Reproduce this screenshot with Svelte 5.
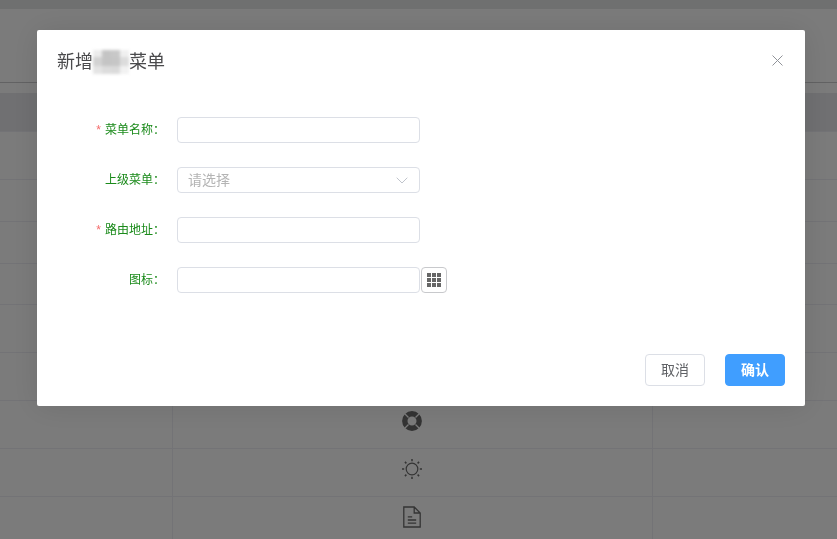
<script>
  const rows = [
    { h: 39, head: true },
    { h: 48 }, { h: 42 }, { h: 42 }, { h: 41 }, { h: 48 }, { h: 48 },
    { h: 48, icon: 'buoy' }, { h: 48, icon: 'sun' }, { h: 48, icon: 'doc' }
  ];
  const fields = [
    { label: '菜单名称：', required: true },
    { label: '上级菜单：', select: true },
    { label: '路由地址：', required: true },
    { label: '图标：', picker: true }
  ];
  const smudge = ['#ececec', '#c4c4c4', '#c8c8c8', '#f0f0f0', '#d2d2d2', '#c4c4c4', '#c6c6c6', '#dcdcdc', '#e4e4e4', '#dcdcdc', '#dadada', '#f2f2f2'];
</script>

<div class="page">
  <div class="topband"></div>
  <div class="toolbar"></div>
  <div class="gap"></div>
  <div class="table">
    {#each rows as r}
      <div class="row" class:head={r.head} style="height:{r.h}px">
        <div class="cell c1"></div>
        <div class="cell c2">
          {#if r.icon === 'buoy'}
            <svg width="22" height="22" viewBox="0 0 22 22"><circle cx="11" cy="11" r="7.200" fill="none" stroke="#686868" stroke-width="5.400"/><path d="M3.500 3.500l4 4M18.500 3.500l-4 4M3.500 18.500l4-4M18.500 18.500l-4-4" stroke="#f7f7f7" stroke-width="1.300"/></svg>
          {:else if r.icon === 'sun'}
            <svg width="22" height="22" viewBox="0 0 22 22" fill="none" stroke="#686868" stroke-width="1.200"><circle cx="11" cy="11" r="5.800"/><path d="M11 1v2.200M11 18.800V21M1 11h2.200M18.800 11H21M3.900 3.900l1.500 1.500M16.600 16.600l1.500 1.500M3.900 18.100l1.500-1.500M16.600 5.400l1.500-1.500" stroke-width="1.500"/></svg>
          {:else if r.icon === 'doc'}
            <svg width="22" height="22" viewBox="0 0 22 22" fill="none" stroke="#686868" stroke-width="1.300"><path d="M2.800 1h10.400l6 6v14H2.800zM13.200 1v6h6M6.800 10.800h4.400M6.800 14h8.400M6.800 17.200h8.400"/></svg>
          {/if}
        </div>
        <div class="cell c3"></div>
      </div>
    {/each}
  </div>
</div>

<div class="overlay">
  <div class="modal">
    <header>
      <h2>新增<span class="smudge">{#each smudge as c}<i style="background:{c}"></i>{/each}</span>菜单</h2>
      <svg class="close" width="11" height="11" viewBox="0 0 11 11"><path d="M.5.5l10 10M10.500.5l-10 10" stroke="#909399" stroke-width="1" fill="none"/></svg>
    </header>
    <form>
      {#each fields as f}
        <div class="item">
          <span class="label">{#if f.required}<em>*</em>{/if}{f.label}</span>
          <div class="control" class:select={f.select}>
            {#if f.select}
              <span class="ph">请选择</span>
              <svg width="12" height="7" viewBox="0 0 12 7"><path d="M.7.700L6 6l5.300-5.300" fill="none" stroke="#c0c4cc" stroke-width="1"/></svg>
            {/if}
          </div>
          {#if f.picker}
            <button type="button" class="pick" aria-label="选择图标">
              <svg width="14" height="14" viewBox="0 0 14 14" fill="#666"><rect width="4" height="4"/><rect x="5" width="4" height="4"/><rect x="10" width="4" height="4"/><rect y="5" width="4" height="4"/><rect x="5" y="5" width="4" height="4"/><rect x="10" y="5" width="4" height="4"/><rect y="10" width="4" height="4"/><rect x="5" y="10" width="4" height="4"/><rect x="10" y="10" width="4" height="4"/></svg>
            </button>
          {/if}
        </div>
      {/each}
    </form>
    <footer>
      <button type="button" class="btn"><span>取消</span></button>
      <button type="button" class="btn primary"><span>确认</span></button>
    </footer>
  </div>
</div>

<style>
  :global(body) {
    margin: 0;
    font-family: "Liberation Sans", "Noto Sans CJK SC", sans-serif;
  }
  .page {
    width: 837px;
    height: 539px;
    overflow: hidden;
    background: #f7f7f7;
  }
  .topband { height: 9px; background: #dfe0e1; }
  .toolbar { height: 73px; border-bottom: 1px solid #c4c4c6; }
  .gap { height: 10px; }
  .row {
    display: flex;
    box-sizing: border-box;
    border-bottom: 1px solid #e6e7ed;
  }
  .row.head { background: #e0e1e4; }
  .cell { box-sizing: border-box; display: flex; align-items: center; justify-content: center; }
  .c1 { width: 173px; border-right: 1px solid #e6e7ed; }
  .c2 { width: 480px; border-right: 1px solid #e6e7ed; padding: 0 1px 7px 0; }
  .row.head .c1, .row.head .c2 { border-right-color: transparent; }
  .c3 { flex: 1; }
  .overlay {
    position: fixed;
    inset: 0;
    background: rgba(0, 0, 0, 0.5);
    overflow: hidden;
  }
  .modal {
    box-sizing: border-box;
    width: 768px;
    height: 376px;
    margin: 30px 0 0 37px;
    background: #fff;
    border-radius: 2px;
    box-shadow: 0 1px 30px rgba(0, 0, 0, 0.1);
    display: flex;
    flex-direction: column;
  }
  header {
    display: flex;
    justify-content: space-between;
    align-items: center;
    padding: 20px 22px 0 20px;
    height: 24px;
  }
  h2 {
    margin: 0;
    font-size: 18px;
    font-weight: 400;
    line-height: 24px;
    height: 24px;
    color: #4a4a4c;
    display: flex;
    align-items: center;
  }
  .smudge {
    width: 36px;
    height: 24px;
    display: grid;
    grid-template-columns: repeat(4, 1fr);
    grid-template-rows: 7px 9px 8px;
    filter: blur(1.500px);
  }
  .close { margin-top: -3px; }
  form {
    padding: 43px 0 0;
    display: flex;
    flex-direction: column;
    gap: 24px;
  }
  .item { display: flex; align-items: center; height: 26px; }
  .label {
    width: 128px;
    padding-right: 12px;
    margin-top: -4px;
    text-align: right;
    font-size: 12px;
    color: #1a8a1a;
    white-space: nowrap;
  }
  .label em { font-style: normal; color: #f56c6c; margin-right: 4px; }
  .control {
    box-sizing: border-box;
    width: 243px;
    height: 26px;
    border: 1px solid #dcdfe6;
    border-radius: 4px;
    background: #fff;
    display: flex;
    align-items: center;
    justify-content: space-between;
  }
  .ph { font-size: 14px; color: #b4b4b4; padding-left: 10px; margin-top: -2px; }
  .select svg { margin-right: 11px; }
  .pick {
    box-sizing: border-box;
    width: 26px;
    height: 26px;
    margin-left: 1px;
    padding: 0;
    border: 1px solid #c8c9cc;
    border-radius: 4px;
    background: #fff;
    display: flex;
    align-items: center;
    justify-content: center;
  }
  footer {
    margin-top: auto;
    padding: 0 20px 20px;
    display: flex;
    justify-content: flex-end;
    gap: 20px;
  }
  .btn {
    box-sizing: border-box;
    width: 60px;
    height: 32px;
    padding: 0 0 2px 0;
    font-family: inherit;
    font-size: 14px;
    border: 1px solid #dcdfe6;
    border-radius: 4px;
    background: #fff;
    color: #606266;
  }
  .primary {
    background: #409eff;
    border-color: #409eff;
    color: #fff;
    font-weight: 700;
  }
</style>
